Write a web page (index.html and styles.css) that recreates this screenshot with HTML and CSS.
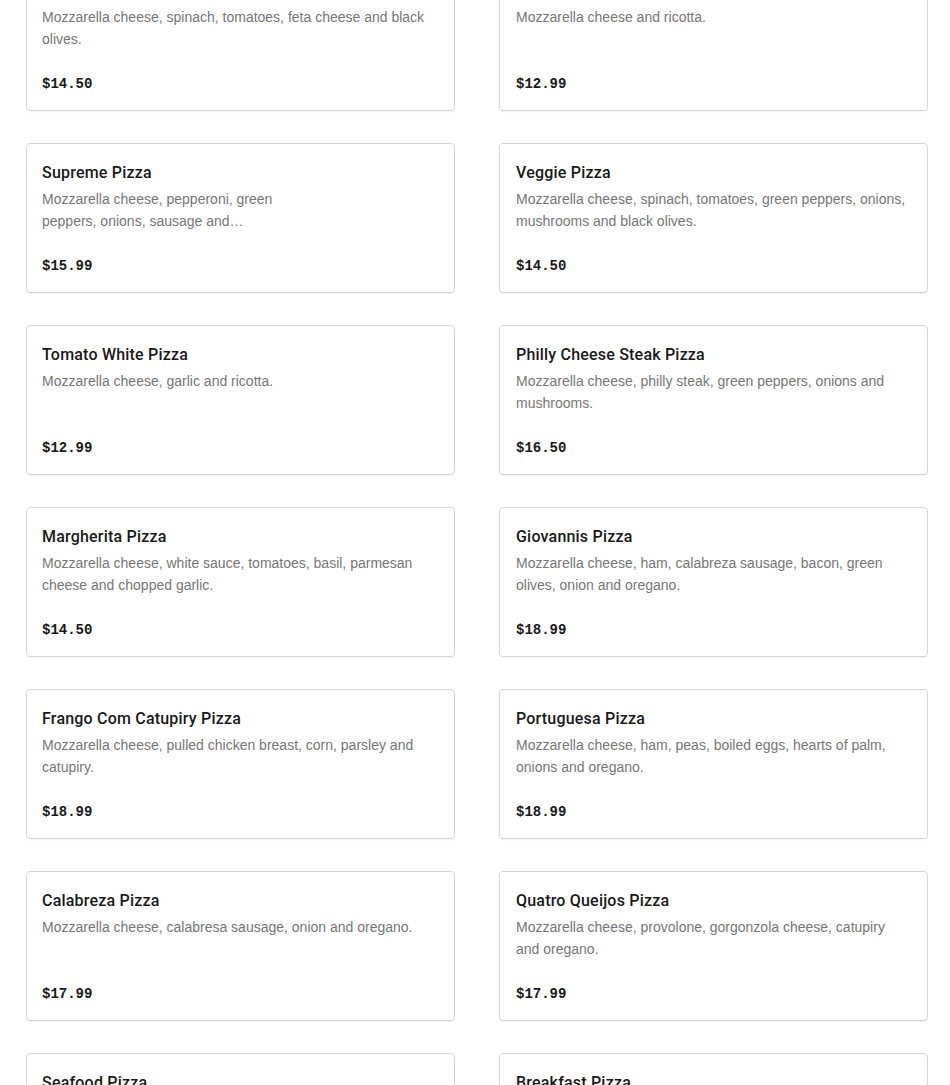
FILE: index.html
```html
<!DOCTYPE html>
<html lang="en">
<head>
<meta charset="utf-8">
<title>Pizza Menu</title>
<link rel="stylesheet" href="styles.css">
</head>
<body>
<main class="menu">
  <div class="grid">
    <article class="card">
      <h3 class="title">Mediterranean Pizza</h3>
      <p class="desc">Mozzarella cheese, spinach, tomatoes, feta cheese and black olives.</p>
      <div class="price">$14.50</div>
    </article>
    <article class="card card-right">
      <h3 class="title">White Ricotta Pizza</h3>
      <p class="desc">Mozzarella cheese and ricotta.</p>
      <div class="price">$12.99</div>
    </article>
    <article class="card">
      <h3 class="title">Supreme Pizza</h3>
      <p class="desc desc-narrow">Mozzarella cheese, pepperoni, green peppers, onions, sausage and mushrooms.</p>
      <div class="price">$15.99</div>
    </article>
    <article class="card card-right">
      <h3 class="title">Veggie Pizza</h3>
      <p class="desc">Mozzarella cheese, spinach, tomatoes, green peppers, onions, mushrooms and black olives.</p>
      <div class="price">$14.50</div>
    </article>
    <article class="card">
      <h3 class="title">Tomato White Pizza</h3>
      <p class="desc">Mozzarella cheese, garlic and ricotta.</p>
      <div class="price">$12.99</div>
    </article>
    <article class="card card-right">
      <h3 class="title">Philly Cheese Steak Pizza</h3>
      <p class="desc">Mozzarella cheese, philly steak, green peppers, onions and mushrooms.</p>
      <div class="price">$16.50</div>
    </article>
    <article class="card">
      <h3 class="title">Margherita Pizza</h3>
      <p class="desc">Mozzarella cheese, white sauce, tomatoes, basil, parmesan cheese and chopped garlic.</p>
      <div class="price">$14.50</div>
    </article>
    <article class="card card-right">
      <h3 class="title">Giovannis Pizza</h3>
      <p class="desc">Mozzarella cheese, ham, calabreza sausage, bacon, green olives, onion and oregano.</p>
      <div class="price">$18.99</div>
    </article>
    <article class="card">
      <h3 class="title">Frango Com Catupiry Pizza</h3>
      <p class="desc">Mozzarella cheese, pulled chicken breast, corn, parsley and catupiry.</p>
      <div class="price">$18.99</div>
    </article>
    <article class="card card-right">
      <h3 class="title">Portuguesa Pizza</h3>
      <p class="desc">Mozzarella cheese, ham, peas, boiled eggs, hearts of palm, onions and oregano.</p>
      <div class="price">$18.99</div>
    </article>
    <article class="card">
      <h3 class="title">Calabreza Pizza</h3>
      <p class="desc">Mozzarella cheese, calabresa sausage, onion and oregano.</p>
      <div class="price">$17.99</div>
    </article>
    <article class="card card-right">
      <h3 class="title">Quatro Queijos Pizza</h3>
      <p class="desc">Mozzarella cheese, provolone, gorgonzola cheese, catupiry and oregano.</p>
      <div class="price">$17.99</div>
    </article>
    <article class="card">
      <h3 class="title">Seafood Pizza</h3>
      <p class="desc">Mozzarella cheese, shrimp, calamari and garlic.</p>
      <div class="price">$19.99</div>
    </article>
    <article class="card card-right">
      <h3 class="title">Breakfast Pizza</h3>
      <p class="desc">Mozzarella cheese, eggs, bacon and sausage.</p>
      <div class="price">$15.99</div>
    </article>
  </div>
</main>
</body>
</html>
```
FILE: styles.css
```css
* { box-sizing: border-box; }
html, body {
  margin: 0;
  padding: 0;
  background: #ffffff;
  overflow: hidden;
}
body {
  font-family: "Liberation Sans", Arial, sans-serif;
  color: #191919;
}
.menu {
  padding-left: 26px;
  margin-top: -39px;
}
.grid {
  display: grid;
  grid-template-columns: 429px 429px;
  column-gap: 44px;
  row-gap: 32px;
}
.card {
  height: 150px;
  border: 1px solid #d6d6d6;
  border-radius: 4px;
  box-shadow: 0 1px 2px rgba(0,0,0,0.06);
  padding: 16px 17px 16px 15px;
  display: flex;
  flex-direction: column;
}
.card-right {
  padding-left: 16px;
  padding-right: 16px;
}
.title {
  margin: 1px 0 0 0;
  font-family: Roboto, "Liberation Sans", sans-serif;
  font-size: 16px;
  line-height: 24px;
  font-weight: 500;
  letter-spacing: 0.2px;
  color: #191919;
}
.desc {
  margin: 3px 0 0 0;
  font-size: 14px;
  line-height: 22px;
  color: #767676;
  height: 44px;
  overflow: hidden;
  display: -webkit-box;
  -webkit-line-clamp: 2;
  -webkit-box-orient: vertical;
}
.desc-narrow {
  max-width: 240px;
}
.price {
  margin-top: 24px;
  font-family: "Liberation Mono", "DejaVu Sans Mono", monospace;
  font-weight: 700;
  font-size: 14px;
  line-height: 20px;
  color: #191919;
}
```
